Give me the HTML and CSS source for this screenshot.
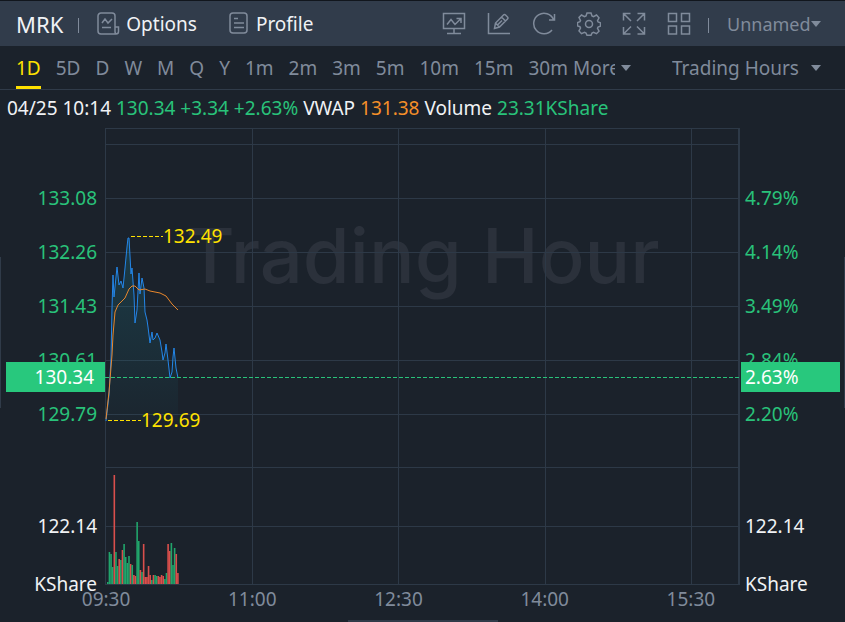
FILE: index.html
```html
<!DOCTYPE html>
<html lang="en">
<head>
  <meta charset="UTF-8" />
  <meta name="viewport" content="width=device-width, initial-scale=1.0">
  <title>MRK</title>
  <link rel="stylesheet" href="styles.css">
</head>
<body>

  <!-- Toolbar -->
  <header class="toolbar">
    <h1 class="symbol">MRK</h1>
    <span class="divider"></span>
    <button class="tool-link options">
      <svg class="icon" viewBox="0 0 24 24"><path d="M18 17V4a3 3 0 0 0-3-3H4a3 3 0 0 0-3 3v15a3 3 0 0 0 3 3h15a2.500 2.500 0 0 0 2.500-2.500V15H18v4.500q0 2.500 2 2.500M5 11l3-4 3 4 4-4M5 15.500h9"/></svg>
      Options
    </button>
    <button class="tool-link">
      <svg class="icon" viewBox="0 0 24 24"><rect x="3" y="1" width="17" height="20" rx="3"/><path d="M7 6.500h4M7 11h10M7 15.500h10"/></svg>
      Profile
    </button>
    <div class="tools">
      <button aria-label="Indicators"><svg class="icon" viewBox="0 0 24 24"><path d="M1.500 1.500h21v15h-21zM12 16.500v5M5 21.500h14M5 12.500l4-5 4 5 6-6M14.500 6.500H19v4.500"/></svg></button>
      <button aria-label="Draw"><svg class="icon" viewBox="0 0 24 24"><path d="M1.500 1v20.500H23M7.500 16.500l1-5.500 8-8q1-1 2 0l2 2q1 1 0 2l-8 8zM14.500 5l4 4M8.500 11l4 4M10.500 13l4.500-4.500"/></svg></button>
      <button aria-label="Refresh"><svg class="icon" viewBox="0 0 24 24"><path d="M20 18A10.300 10.300 0 1 1 21.500 7.500M22.500 2v6H17"/></svg></button>
      <button aria-label="Settings"><svg class="icon" viewBox="0 0 24 24"><path d="M10 1h4l1 3 1.500.7L19.500 3l2.500 2.800-1.500 2.900.6 1.300 2.400.8v3.400l-2.400.8-.6 1.300 1.500 2.900-2.500 2.500-3-1.400-1.500.7-1 2.300h-4l-1-2.300-1.500-.7-3 1.400L2 18.900l1.500-2.900-.6-1.300-2.400-.8v-3.400l2.400-.8.6-1.300L2 5.500 4.500 3l3 1.700L9 4z"/><circle cx="12" cy="12" r="3.500"/></svg></button>
      <button aria-label="Full screen"><svg class="icon" viewBox="0 0 24 24"><path d="M1.500 8.500v-7h7M1.500 1.500L9 9M15.500 1.500h7v7M22.500 1.500L15 9M1.500 15v7h7M1.500 22L9 14.500M15.500 22h7v-7M22.500 22L15 14.500"/></svg></button>
      <button aria-label="Layout"><svg class="icon" viewBox="0 0 24 24"><path d="M1.500 1.500h8v8h-8zM14.500 1.500h8v8h-8zM1.500 14h8v8h-8zM14.500 14h8v8h-8z"/></svg></button>
    </div>
    <span class="divider"></span>
    <label class="dropdown name">
      <select aria-label="Layout name"><option>Unnamed</option></select>
      <span class="caret"></span>
    </label>
  </header>

  <!-- Periods -->
  <nav class="periods">
    <button class="active">1D</button>
    <button>5D</button>
    <button>D</button>
    <button>W</button>
    <button>M</button>
    <button>Q</button>
    <button>Y</button>
    <button>1m</button>
    <button>2m</button>
    <button>3m</button>
    <button>5m</button>
    <button>10m</button>
    <button>15m</button>
    <button>30m</button>
    <label class="dropdown more">
      <select aria-label="More periods"><option>More</option></select>
      <span class="caret"></span>
    </label>
    <label class="dropdown hours">
      <select aria-label="Session"><option>Trading Hours</option></select>
      <span class="caret"></span>
    </label>
  </nav>

  <!-- Quote line -->
  <p class="quote">04/25 10:14 <span class="up">130.34 +3.34 +2.63%</span> VWAP <span class="vwap">131.38</span> Volume <span class="up">23.31KShare</span></p>

  <!-- Chart -->
  <main class="chart">
    <div class="axis left">
      <span>133.08</span>
      <span>132.26</span>
      <span>131.43</span>
      <span>130.61</span>
      <span>129.79</span>
      <span class="volume">122.14</span>
      <span class="unit">KShare</span>
      <strong class="badge">130.34</strong>
    </div>

    <div class="plot">
      <div class="watermark">Trading Hour</div>
      <svg class="lines" viewBox="0 0 635 457" preserveAspectRatio="none">
        <defs>
          <linearGradient id="fade" x1="0" y1="0" x2="0" y2="1">
            <stop offset="0" stop-color="#1c7a8c" stop-opacity=".3"/>
            <stop offset="1" stop-color="#1c7a8c" stop-opacity=".04"/>
          </linearGradient>
        </defs>
        <path class="grid" d="M0 .5H634M0 16.500H634M0 70.500H634M0 124.500H634M0 178.500H634M0 232.500H634M0 286.500H634M0 339.500H634M0 398.500H634M0 456.500H634M.5 0V457M147.500 0V457M293.500 0V457M440.500 0V457M586.500 0V457M633.500 0V457M634.500 0V457"/>
        <polygon fill="url(#fade)" points="1,293 4,267 6,230 7,180 8,147 9,169 12,139 14,157 16,153 18,160 20,140 22,119 23,110 24,110 26,146 27,140 29,167 30,195 32,182 34,145 35,166 37,150 39,160 40,184 42,192 43,199 45,215 47,204 48,212 50,210 52,205 55,212 57,224 58,232 60,225 61,216 63,232 65,250 67,244 68,229 69,220 71,240 73,250 73,293"/>
        <polyline class="price" points="1,293 4,267 6,230 7,180 8,147 9,169 12,139 14,157 16,153 18,160 20,140 22,119 23,110 24,110 26,146 27,140 29,167 30,195 32,182 34,145 35,166 37,150 39,160 40,184 42,192 43,199 45,215 47,204 48,212 50,210 52,205 55,212 57,224 58,232 60,225 61,216 63,232 65,250 67,244 68,229 69,220 71,240 73,250"/>
        <polyline class="average" points="1,291 4,264 7,227 8,207 10,184 13,177 20,170 24,161 27,158 30,158 34,162 40,161 45,163 55,165 61,168 67,176 73,182"/>
        <path class="last" d="M0 249.500H635"/>
        <path class="extreme" d="M26 108.500H58M3 292.500H36"/>
        <g id="bars"></g>
      </svg>
      <span class="mark high">132.49</span>
      <span class="mark low">129.69</span>
    </div>

    <div class="axis right">
      <span>4.79%</span>
      <span>4.14%</span>
      <span>3.49%</span>
      <span>2.84%</span>
      <span>2.20%</span>
      <span class="volume">122.14</span>
      <span class="unit">KShare</span>
      <strong class="badge">2.63%</strong>
    </div>
  </main>

  <div class="times">
    <span>09:30</span>
    <span>11:00</span>
    <span>12:30</span>
    <span>14:00</span>
    <span>15:30</span>
  </div>

  <span class="handle side start"></span>
  <span class="handle side end"></span>
  <span class="handle bottom"></span>

  <script src="script.js"></script>
</body>
</html>
```
FILE: styles.css
```css
* {
  box-sizing: border-box;
}

body {
  margin: 0;
  background: #1b222b;
  color: #f0f2f5;
  font-family: "Noto Sans", "Open Sans", sans-serif;
  font-size: 19px;
  line-height: 26px;
  overflow: hidden;
}

button, select {
  appearance: none;
  margin: 0;
  padding: 0;
  border: none;
  background: none;
  color: inherit;
  font: inherit;
  cursor: pointer;
}

/* Toolbar */
.toolbar {
  display: flex;
  align-items: center;
  height: 46px;
  padding: 0 24px 0 16px;
  border-top: 1px solid #11161d;
  background: #313c4b;
}

.symbol {
  margin: 0;
  font-size: 22px;
  font-weight: normal;
}

.divider {
  width: 1px;
  height: 15px;
  margin-top: 4px;
  margin-left: 15px;
  background: #808b9b;
}

.tool-link {
  display: flex;
  align-items: center;
  gap: 5px;
  margin-left: 30px;
}

.tool-link.options {
  margin-left: 18px;
}

.icon {
  display: block;
  width: 24px;
  height: 24px;
  fill: none;
  stroke: #808b9b;
  stroke-width: 1.5;
}

.tools {
  display: flex;
  gap: 21px;
  margin-left: auto;
  padding-right: 2px;
}

.dropdown {
  display: flex;
  align-items: center;
  color: #808b9b;
}

.caret {
  border: 5px solid transparent;
  border-top: 6px solid #808b9b;
  border-bottom: none;
  pointer-events: none;
}

.name {
  margin-left: 18px;
  font-size: 18px;
}

/* Periods */
.periods {
  display: flex;
  align-items: center;
  gap: 15px;
  height: 44px;
  padding: 0 24px 0 16px;
  border-bottom: 1px solid #303b49;
  color: #808b9b;
}

.periods button {
  height: 43px;
  padding-top: 3px;
  border-bottom: 3px solid transparent;
}

.periods .active {
  border-color: #ffe100;
  color: #ffe100;
}

.more {
  gap: 6px;
  margin-left: -10px;
}

.more select {
  width: 42px;
  overflow: hidden;
}

.hours {
  gap: 12px;
  margin-left: auto;
}

/* Quote line */
.quote {
  height: 38px;
  margin: 0;
  padding: 5px 7px;
  white-space: nowrap;
}

.up {
  color: #29c27a;
}

.vwap {
  color: #f58f29;
}

/* Chart */
.chart {
  display: grid;
  grid-template-columns: 105px 1fr 105px;
  height: 457px;
}

.axis {
  position: relative;
  display: grid;
  grid-template-rows: repeat(5, 54px) 56px 58px 58px;
  align-items: center;
  align-content: start;
  padding-top: 43px;
  color: #29c27a;
}

.left {
  padding-right: 8px;
  text-align: right;
}

.right {
  padding-left: 5px;
}

.axis .volume {
  grid-row: 7;
  color: #f0f2f5;
}

.axis .unit {
  grid-row: 8;
  color: #f0f2f5;
}

.badge {
  position: absolute;
  top: 234px;
  height: 30px;
  background: #28c87d;
  color: #fff;
  font-weight: normal;
  line-height: 30px;
}

.left .badge {
  left: 6px;
  right: 0;
  padding-right: 11px;
}

.right .badge {
  left: 1px;
  right: 5px;
  padding-left: 4px;
}

.plot {
  position: relative;
}

.watermark {
  position: absolute;
  top: 82px;
  left: 0;
  right: 0;
  color: #2b313b;
  font-family: Inter, sans-serif;
  font-size: 76px;
  font-weight: 500;
  line-height: 90px;
  text-align: center;
  white-space: nowrap;
}

.lines {
  position: relative;
  display: block;
  width: 100%;
  height: 457px;
}

.lines path, .lines polyline {
  fill: none;
  vector-effect: non-scaling-stroke;
}

.grid {
  stroke: #2d3947;
}

.lines .price {
  stroke: #2386e8;
}

.lines .average {
  stroke: #e8872c;
}

.last {
  stroke: #29c27a;
  stroke-dasharray: 4 2;
}

.extreme {
  stroke: #ffe100;
  stroke-dasharray: 4 2;
}

.buy {
  fill: #21a56b;
}

.sell {
  fill: #d94f4c;
}

.mark {
  position: absolute;
  color: #ffe100;
}

.high {
  top: 95px;
  left: 58px;
}

.low {
  top: 279px;
  left: 36px;
}

.times {
  display: grid;
  grid-template-columns: repeat(5, 1fr);
  padding: 1px 81px 0 33px;
  color: #808b9b;
  text-align: center;
}

/* Panel handles */
.handle {
  position: fixed;
  background: #303b49;
}

.side {
  top: 257px;
  width: 1px;
  height: 151px;
}

.start {
  left: 0;
}

.end {
  right: 0;
}

.bottom {
  bottom: 0;
  left: calc(50% - 75px);
  width: 150px;
  height: 2px;
}
```
FILE: script.js
```js
// one bar per minute: height, g = buy, r = sell
const volumes = "2g 32g 30g 17g 109r 32g 18g 25r 24g 34r 40g 27g 21g 28g 20r 19g 9r 8r 62g 43g 14r 12g 40r 7r 7r 18r 9r 4g 9r 9g 8g 8r 7r 9r 8r 5g 11g 40r 33r 41g 19g 36g 30r 11r".split(" ");
const bars = document.getElementById("bars");

volumes.forEach((item, i) => {
  const height = parseInt(item);
  const rect = document.createElementNS("http://www.w3.org/2000/svg", "rect");
  rect.setAttribute("class", item.endsWith("g") ? "buy" : "sell");
  rect.setAttribute("x", 2 + i * 1.63);
  rect.setAttribute("y", 456 - height);
  rect.setAttribute("width", 1.6);
  rect.setAttribute("height", height);
  bars.appendChild(rect);
});
```
